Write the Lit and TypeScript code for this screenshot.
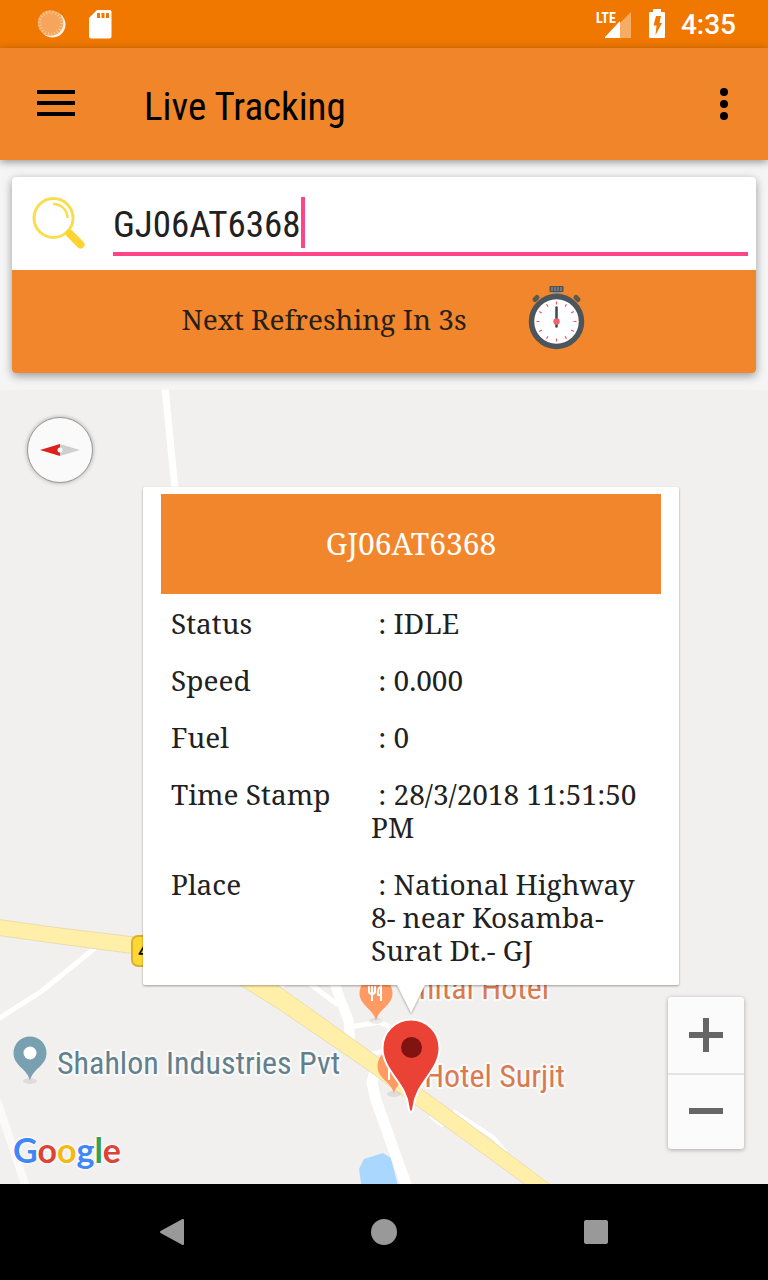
import { LitElement, html, css, svg } from "lit";
import { customElement, property, state } from "lit/decorators.js";

const SERIF = css`"Noto Serif", "DejaVu Serif Condensed", "DejaVu Serif", serif`;
const NARROW = css`"Roboto Condensed", Roboto, sans-serif`;

@customElement("status-bar")
class StatusBar extends LitElement {
  static styles = css`
    :host { display: flex; align-items: center; height: 48px; padding: 0 32px 0 36px; background: #f07800; color: #fff; font-family: Roboto, sans-serif; }
    .left, .right { display: flex; align-items: center; }
    .left { gap: 20px; flex: 1; }
    .time { font-size: 28px; line-height: 48px; font-weight: 500; margin-left: 16px; padding-top: 2px; }
    .battery { margin-left: 18px; }
    .lte { font: 700 14px ${NARROW}; }
    svg { display: block; }
  `;
  render() {
    return html`
      <div class="left">
        <svg width="32" height="48" viewBox="36 0 32 48" aria-hidden="true">
          <circle cx="52.500" cy="24.500" r="13" fill="#fff" opacity=".9" />
          <circle cx="50.500" cy="23" r="12.800" fill="#f6a65c" />
          <circle cx="50.500" cy="23" r="11" fill="none" stroke="#fbc896" stroke-width="3" stroke-dasharray="1 2.140" />
        </svg>
        <svg width="24" height="48" viewBox="88 0 24 48" aria-hidden="true">
          <path fill="#fff" d="M97 10h12.500a2 2 0 0 1 2 2v24.500a2 2 0 0 1-2 2H91a2 2 0 0 1-2-2V18Z" />
          <path fill="#f07800" d="M97 13h3v5h-3zM101.500 13h3v5h-3zM106 13h3v5h-3z" />
        </svg>
      </div>
      <div class="right">
        <svg width="36" height="48" viewBox="595 0 36 48" aria-hidden="true">
          <path fill="#f6ac62" d="M620 23 631 12V38H620Z" />
          <path fill="#fff" d="M605 38V37L620 21V38Z" />
          <text class="lte" x="596" y="23" fill="#fff">LTE</text>
        </svg>
        <svg class="battery" width="16" height="48" viewBox="649 0 16 48" aria-hidden="true">
          <path fill="#fff" d="M653 9h8v3h3a1 1 0 0 1 1 1v24a1 1 0 0 1-1 1h-14a1 1 0 0 1-1-1V13a1 1 0 0 1 1-1h3Z" />
          <path fill="#f07800" d="M656 16h5l-1.500 7h2.500l-6.500 12 1-9.500h-3Z" />
        </svg>
        <span class="time">4:35</span>
      </div>
    `;
  }
}

@customElement("app-bar")
class AppBar extends LitElement {
  @property() heading = "";
  static styles = css`
    :host { display: flex; align-items: center; height: 112px; padding: 0 24px; background: #f18529; box-shadow: 0 2px 8px rgba(0, 0, 0, .4); z-index: 1; }
    button { border: 0; background: none; padding: 0; width: 64px; height: 64px; display: grid; place-items: center; }
    .more { width: 40px; }
    h1 { flex: 1; margin: 6px 0 0 56px; font: 400 39px/48px ${NARROW}; color: #000; }
    svg { display: block; }
  `;
  render() {
    return html`
      <button aria-label="Open menu">
        <svg width="38" height="28" viewBox="0 0 38 28"><path d="M0 2h38M0 13h38M0 24h38" stroke="#000" stroke-width="4" /></svg>
      </button>
      <h1>${this.heading}</h1>
      <button class="more" aria-label="More options">
        <svg width="8" height="32" viewBox="0 0 8 32"><circle cx="4" cy="4" r="4" /><circle cx="4" cy="16" r="4" /><circle cx="4" cy="28" r="4" /></svg>
      </button>
    `;
  }
}

@customElement("search-card")
class SearchCard extends LitElement {
  @property() vehicle = "";
  @property({ type: Number }) seconds = 0;
  static styles = css`
    :host { display: block; border-radius: 4px; background: #fff; box-shadow: 0 3px 10px rgba(0, 0, 0, .38); overflow: hidden; }
    .row { display: flex; padding: 20px 8px 14px 20px; }
    .row label { width: 81px; }
    .field { flex: 1; display: flex; align-items: flex-start; height: 55px; border-bottom: 4px solid #ff4588; }
    input { field-sizing: content; border: 0; outline: 0; padding: 0; background: none; font: 400 37px/48px ${NARROW}; color: #212121; caret-color: transparent; height: 55px; }
    .caret { width: 4px; height: 51px; background: #ff4588; }
    .refresh { display: flex; align-items: center; justify-content: center; gap: 61px; box-sizing: border-box; min-height: 103px; padding: 0 2px 4px 0; background: #f1862d; color: #272018; font: 28px/33px ${SERIF}; }
    svg { display: block; }
  `;
  render() {
    const ticks = Array.from({ length: 12 }, (_, i) => i * 30);
    return html`
      <div class="row">
        <label for="q" aria-label="Vehicle number">
          <svg width="53" height="54" viewBox="0 0 53 54">
            <circle cx="21.500" cy="21" r="19.500" fill="none" stroke="#f9dd4e" stroke-width="3" />
            <path d="M21 7A14 14 0 0 1 35.500 21" fill="none" stroke="#f9dd4e" stroke-width="2.500" />
            <path d="M35 36 37.500 33.500" stroke="#f9dd4e" stroke-width="4" />
            <path d="M38 37 48.500 47.500" stroke="#fdd32f" stroke-width="8" stroke-linecap="round" />
          </svg>
        </label>
        <div class="field">
          <input id="q" type="text" .value=${this.vehicle} spellcheck="false" />
          <span class="caret"></span>
        </div>
      </div>
      <div class="refresh">
        <span>Next Refreshing In ${this.seconds}s</span>
        <svg width="57" height="68" viewBox="0 0 57 68" aria-hidden="true">
          <path d="M24.500 5h8v5h-8z" fill="#8f8b80" />
          <rect x="21.500" width="14" height="6" rx="1" fill="#4c5458" />
          <path d="M24 1v4M27 1v4M30 1v4M33 1v4" stroke="#9a9d9c" stroke-width="1" />
          <path d="M7 13.500 9 11.500M50 13.500 48 11.500" stroke="#5b5a4e" stroke-width="5" stroke-linecap="round" />
          <circle cx="28.500" cy="35.500" r="25" fill="#fff" stroke="#4b555b" stroke-width="5.500" />
          ${ticks.map((a) => svg`<path d="M28.500 15.500v3" stroke="#ec5564" stroke-width="1.200" transform="rotate(${a} 28.500 35.500)" />`)}
          <path d="M28.500 21.500v19" stroke="#42474b" stroke-width="2.500" stroke-linecap="round" />
          <circle cx="28.500" cy="35.500" r="3.200" fill="#f0616f" />
        </svg>
      </div>
    `;
  }
}

@customElement("live-map")
class LiveMap extends LitElement {
  @property() vehicle = "";
  @property({ attribute: false }) details: [string, string][] = [];
  static styles = css`
    :host { display: block; position: relative; overflow: hidden; background: #f1f0ee; }
    .canvas { position: absolute; inset: 0; width: 100%; height: 100%; }
    .place { font: 400 32px ${NARROW}; stroke: #fafafa; stroke-width: 4px; stroke-linejoin: round; paint-order: stroke; }
    .industry { fill: #63808d; }
    .hotel { fill: #d97a50; }
    .shield { font: 400 22px Roboto, sans-serif; }
    .logo { position: absolute; left: 13px; bottom: 10px; font: 700 34px/48px Lato, sans-serif; text-shadow: 0 0 3px #fff, 0 0 3px #fff, 0 0 3px #fff; text-decoration: none; }
    .blue { color: #4285f4; }
    .red { color: #db4437; }
    .yellow { color: #f4b912; }
    .green { color: #34a053; }
    .compass { position: absolute; left: 27px; top: 27px; width: 66px; height: 66px; padding: 0; border: 1px solid #999; border-radius: 50%; background: #fafafa; box-shadow: 0 0 4px rgba(0, 0, 0, .3); display: grid; place-items: center; }
    .zoom { position: absolute; right: 24px; bottom: 35px; width: 76px; border-radius: 3px; background: #fbfbfb; box-shadow: 0 1px 4px rgba(0, 0, 0, .3); }
    .zoom button { display: grid; place-items: center; width: 100%; height: 76px; border: 0; padding: 0; background: none; }
    .zoom button + button { border-top: 2px solid #e4e4e4; padding-bottom: 2px; }
    .info { position: absolute; left: 143px; top: 97px; width: 536px; box-sizing: border-box; padding: 7px 18px; background: #fff; filter: drop-shadow(0 1px 1px rgba(0, 0, 0, .35)); border-radius: 2px; color: #212121; font: 28px/33px ${SERIF}; }
    .info::after { content: ""; position: absolute; left: 254px; top: 100%; border: 14px solid transparent; border-top: 28px solid #fff; border-bottom: 0; }
    h2 { margin: 0; font: 400 30px/100px ${SERIF}; text-align: center; color: #fff; background: #f1862d; }
    table { width: 100%; table-layout: fixed; border-collapse: collapse; }
    th, td { padding: 13px 0 11px 10px; text-align: left; vertical-align: top; font-weight: 400; white-space: pre-wrap; }
    th { width: 190px; }
    td { padding-right: 10px; }
    svg { display: block; }
  `;

  pin(x: number, tip: number, fill: string) {
    return svg`
      <ellipse cx=${x} cy=${tip} rx="7" ry="3" fill="#000" opacity=".08" />
      <path transform="translate(${x} ${tip})" fill=${fill} d="M0 0C-2-12-16.500-15-16.500-28A16.500 16.500 0 0 1 16.500-28C16.500-15 2-12 0 0Z" />`;
  }

  render() {
    return html`
      <svg class="canvas" viewBox="0 390 768 794" preserveAspectRatio="xMinYMin slice" role="img" aria-label="Map">
        <g fill="none" stroke="#fff">
          <path d="M165 388 176 500" stroke-width="7" />
          <path d="M-2 1019 42 991 95 948" stroke-width="5" />
          <path d="M-3 1100 27 1190" stroke="#fafafa" stroke-width="8" />
          <path d="M305 980 338 1005" stroke-width="5" />
          <path d="M333 980 349 1022 350 1046" stroke-width="10" />
          <path d="M350 1027 380 1022 400 1032" stroke-width="5" />
          <path d="M366 1055 384 1051" stroke-width="4" />
          <path d="M274 990 284 984" stroke-width="5" />
        </g>
        <path d="M362 1190 359 1169 364 1159 383 1153 391 1158 399 1190Z" fill="#a9d7fd" />
        <path d="M375 1070 372 1083 376 1100 408 1190" fill="none" stroke="#fff" stroke-width="11" />
        <path d="M430 1116 443 1126M453 1111 493 1137 506 1152" fill="none" stroke="#fff" stroke-width="4" />
        <path fill="#ffefa9" stroke="#ecdcae" d="M-5 919 60 928 143 938 230 960 280 987 357 1042 453 1112 560 1192 530 1188 420 1108 365 1068 280 1010 240 985 143 955 60 944-5 935Z" />
        <rect x="132" y="936" width="44" height="30" rx="6" fill="#fdd835" stroke="#d9b12c" stroke-width="2" />
        <text class="shield" x="138" y="958">48</text>
        ${this.pin(30, 1081, "#78a0b0")}
        <circle cx="30" cy="1053" r="6.500" fill="#fff" />
        ${this.pin(376, 1021, "#ff9b62")}
        <path d="M369 986v5q0 3 3 3v7M372 986v8M375 986v5q0 3-3 3M381 1001v-15q-4 3-3 9h3" fill="none" stroke="#fff" stroke-width="2" />
        ${this.pin(394, 1094, "#ff9b62")}
        <path d="M389 1068v12" stroke="#fff" stroke-width="2" />
        <text class="place industry" x="57" y="1074">Shahlon Industries Pvt</text>
        <text class="place hotel" x="549" y="999" text-anchor="end">mital Hotel</text>
        <text class="place hotel" x="565" y="1087" text-anchor="end">Hotel Surjit</text>
        <path fill="#ea4335" stroke="#fff" stroke-width="2" d="M411 1112C409 1112 409 1110 408.500 1107 406 1082 382.500 1071 382.500 1048A28.500 28.500 0 0 1 439.500 1048C439.500 1071 416 1082 413.500 1107 413 1110 413 1112 411 1112Z" />
        <circle cx="411.500" cy="1047.500" r="10.500" fill="#811411" />
      </svg>
      <button class="compass" aria-label="Reset rotation">
        <svg width="40" height="12" viewBox="0 0 40 12">
          <path fill="#e0201f" d="M0 6 20 0V12Z" /><path fill="#cfcfcf" d="M40 6 20 0V12Z" /><circle cx="20" cy="6" r="2.500" fill="#fff" />
        </svg>
      </button>
      <section class="info">
        <h2>${this.vehicle}</h2>
        <table>
          <tbody>${this.details.map(([k, v]) => html`<tr><th scope="row">${k}</th><td>${" : " + v}</td></tr>`)}</tbody>
        </table>
      </section>
      <a class="logo" href="#" aria-label="Google"><span class="blue">G</span><span class="red">o</span><span class="yellow">o</span><span class="blue">g</span><span class="green">l</span><span class="red">e</span></a>
      <div class="zoom">
        <button aria-label="Zoom in"><svg width="34" height="34" viewBox="0 0 34 34"><path d="M0 17h34M17 0v34" stroke="#666" stroke-width="6" /></svg></button>
        <button aria-label="Zoom out"><svg width="34" height="34" viewBox="0 0 34 34"><path d="M0 17h34" stroke="#666" stroke-width="6" /></svg></button>
      </div>
    `;
  }
}

@customElement("nav-bar")
class NavBar extends LitElement {
  static styles = css`
    :host { display: flex; height: 96px; padding: 0 66px; background: #000; }
    button { flex: 1; display: grid; place-items: center; border: 0; padding: 0; background: none; }
  `;
  render() {
    return html`
      <button aria-label="Back"><svg width="26" height="28" viewBox="0 0 26 28"><path d="M2 14 24 2V26Z" fill="#999" stroke="#999" stroke-width="2" stroke-linejoin="round" /></svg></button>
      <button aria-label="Home"><svg width="26" height="26" viewBox="0 0 26 26"><circle cx="13" cy="13" r="13" fill="#999" /></svg></button>
      <button aria-label="Recent apps"><svg width="25" height="25" viewBox="0 0 25 25"><rect width="24" height="24" rx="2" fill="#999" /></svg></button>
    `;
  }
}

@customElement("app-root")
class AppRoot extends LitElement {
  @state() vehicle = "GJ06AT6368";
  static styles = css`
    :host { display: flex; flex-direction: column; min-height: 100vh; background: #f5f5f5; }
    app-bar { position: relative; }
    search-card { margin: 17px 12px; }
    live-map { flex: 1; min-height: 640px; }
  `;
  render() {
    return html`
      <status-bar></status-bar>
      <app-bar heading="Live Tracking"></app-bar>
      <search-card .vehicle=${this.vehicle} .seconds=${3}></search-card>
      <live-map
        .vehicle=${this.vehicle}
        .details=${[
          ["Status", "IDLE"],
          ["Speed", "0.000"],
          ["Fuel", "0"],
          ["Time Stamp", "28/3/2018 11:51:50 PM"],
          ["Place", "National Highway 8- near Kosamba-Surat Dt.- GJ"],
        ]}
      ></live-map>
      <nav-bar></nav-bar>
    `;
  }
}
